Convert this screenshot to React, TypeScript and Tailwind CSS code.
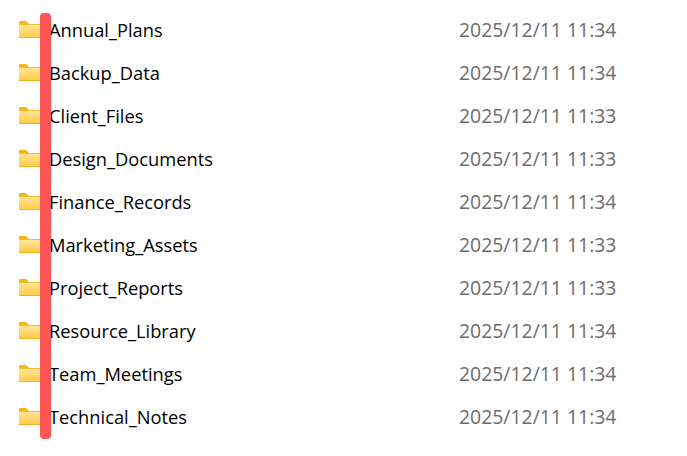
const folders = [
  { name: 'Annual_Plans', modified: '2025/12/11 11:34' },
  { name: 'Backup_Data', modified: '2025/12/11 11:34' },
  { name: 'Client_Files', modified: '2025/12/11 11:33' },
  { name: 'Design_Documents', modified: '2025/12/11 11:33' },
  { name: 'Finance_Records', modified: '2025/12/11 11:34' },
  { name: 'Marketing_Assets', modified: '2025/12/11 11:33' },
  { name: 'Project_Reports', modified: '2025/12/11 11:33' },
  { name: 'Resource_Library', modified: '2025/12/11 11:34' },
  { name: 'Team_Meetings', modified: '2025/12/11 11:34' },
  { name: 'Technical_Notes', modified: '2025/12/11 11:34' },
];

const FolderIcon = () => (
  <svg width="24" height="17" viewBox="0 0 24 17" className="shrink-0">
    <defs>
      <linearGradient id="folderBody" x1="0" y1="0" x2="0" y2="1">
        <stop offset="0" stopColor="#ffe596" />
        <stop offset="1" stopColor="#ffcc4a" />
      </linearGradient>
    </defs>
    <path d="M0 1 Q0 0 1 0 H7 L9.5 2.5 V5 H0 Z" fill="#f5b316" />
    <rect x="0" y="3" width="24" height="1.5" fill="#f7bd2c" />
    <rect x="0" y="4" width="24" height="12" fill="url(#folderBody)" />
    <rect x="0" y="16" width="24" height="1" fill="#f2b21d" />
  </svg>
);

export default function App() {
  return (
    <div className="relative h-[456px] w-[687px] overflow-hidden bg-white font-['Open_Sans','Noto_Sans',sans-serif]">
      <div className="flex flex-col pt-[8px]">
        {folders.map(folder => (
          <div key={folder.name} className="flex h-[43px] items-center pl-[19px]">
            <div className="w-[30px] shrink-0">
              <FolderIcon />
            </div>
            <span className="w-[410px] shrink-0 text-[18.3px] text-black">{folder.name}</span>
            <span className="text-[19.4px] text-[#6d6d6d]">{folder.modified}</span>
          </div>
        ))}
      </div>
      {/* red marker drawn over the list */}
      <div className="absolute left-[40px] top-[13px] h-[426px] w-[11px] rounded-[4px] bg-[#ff5555]" />
    </div>
  );
}
